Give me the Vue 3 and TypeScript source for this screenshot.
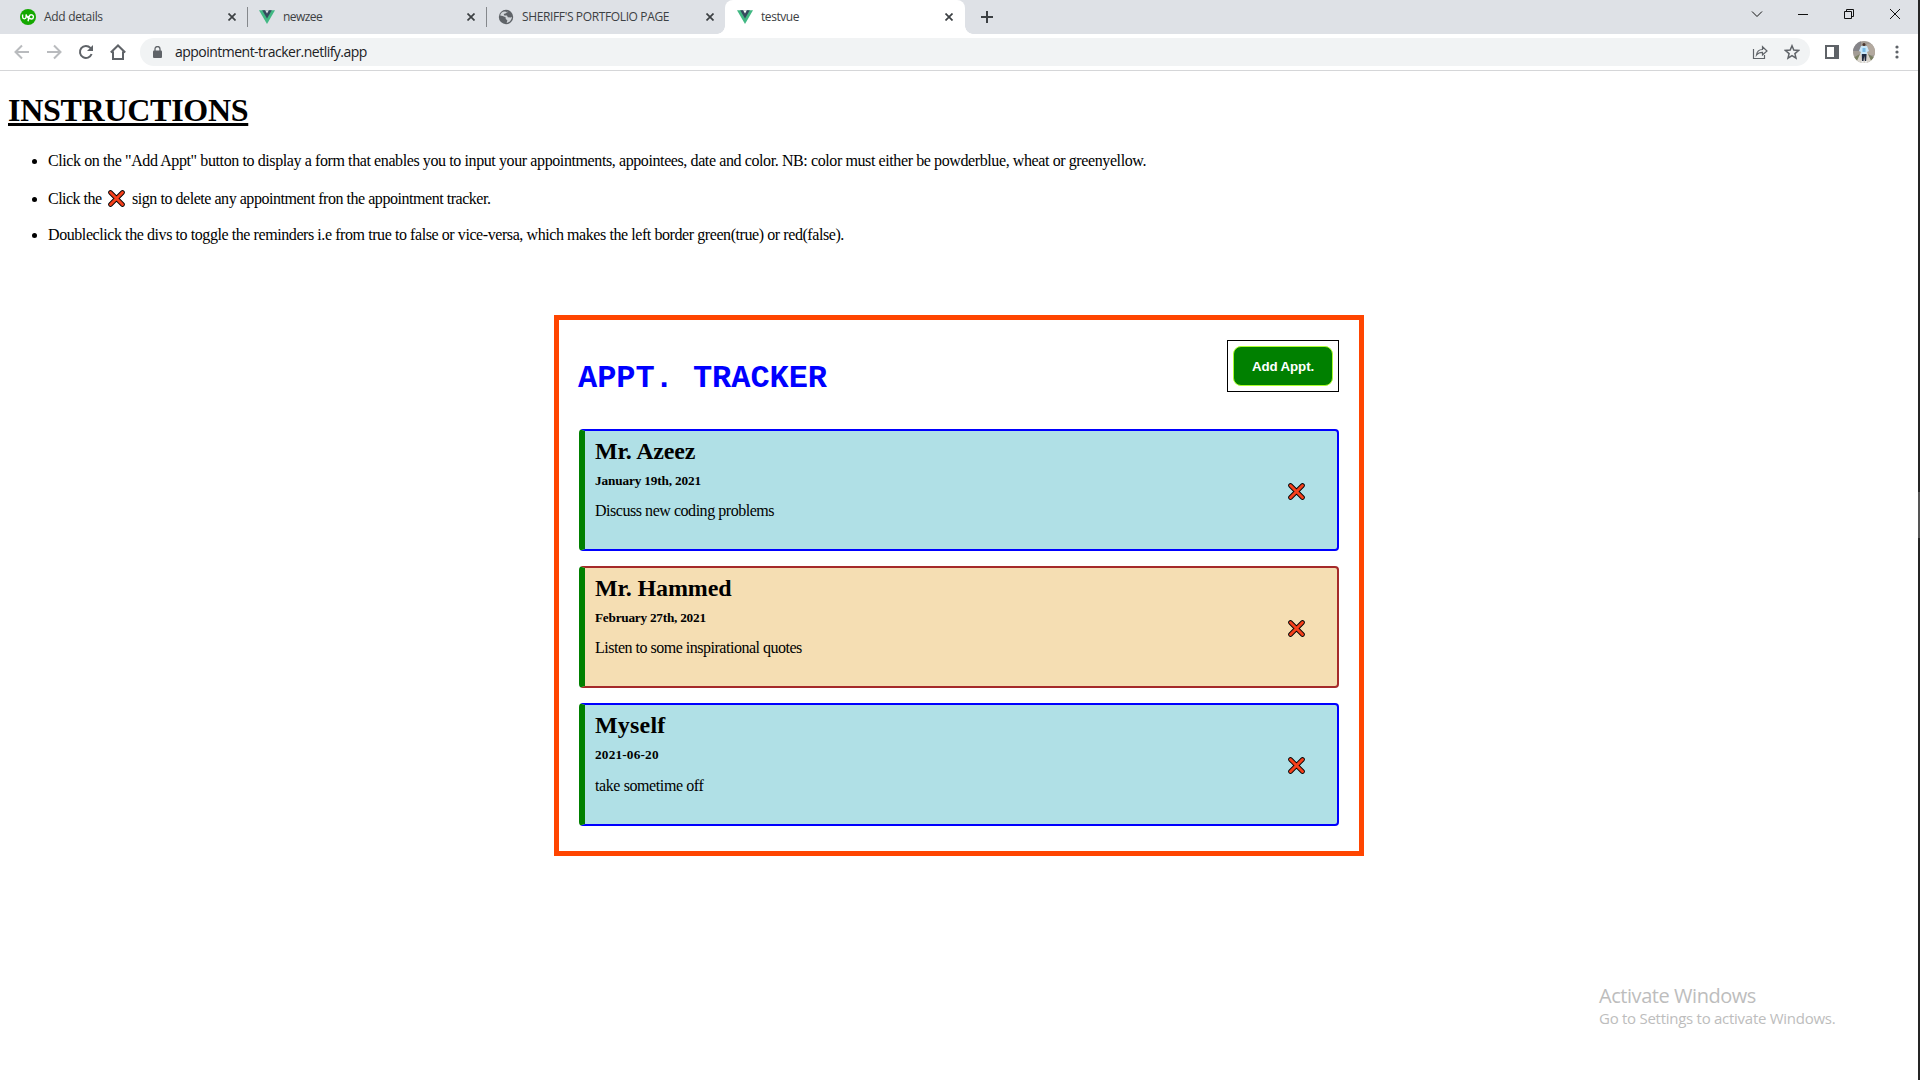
<script setup lang="ts">
interface Tab { title: string; icon: 'up' | 'vue' | 'globe'; active?: boolean; spacing: number }
interface Appointment { name: string; date: string; text: string; tone: string; spacing: [number, number, number] }

const tabs: Tab[] = [
  { title: 'Add details', icon: 'up', spacing: -0.31 },
  { title: 'newzee', icon: 'vue', spacing: -0.55 },
  { title: "SHERIFF'S PORTFOLIO PAGE", icon: 'globe', spacing: -0.37 },
  { title: 'testvue', icon: 'vue', active: true, spacing: -0.43 },
]
const appointments: Appointment[] = [
  { name: 'Mr. Azeez', date: 'January 19th, 2021', text: 'Discuss new coding problems', tone: 'powderblue', spacing: [-0.15, -0.15, -0.46] },
  { name: 'Mr. Hammed', date: 'February 27th, 2021', text: 'Listen to some inspirational quotes', tone: 'wheat', spacing: [-0.13, -0.24, -0.49] },
  { name: 'Myself', date: '2021-06-20', text: 'take sometime off', tone: 'powderblue', spacing: [0.2, 0.18, -0.4] },
]
</script>

<template>
  <div class="window">
    <div class="browser">
      <div class="tabstrip">
        <div v-for="tab in tabs" :key="tab.title" class="tab" :class="{ active: tab.active }">
          <svg v-if="tab.icon === 'up'" class="fav" viewBox="0 0 16 16">
            <circle cx="8" cy="8" r="8" fill="#14a800" />
            <path d="M2.6 5.4v2.7a1.7 1.7 0 0 0 3.5 0V5.4c.6 2 1.500 3.600 2.600 4.300M8 12.300l1.300-5a2.100 2.100 0 1 1 2 2.700c-1.500 0-2.800-1.300-3.600-2.800" fill="none" stroke="#fff" stroke-width="1.4" />
          </svg>
          <svg v-else-if="tab.icon === 'vue'" class="fav" viewBox="0 0 16 16">
            <path d="M0 1.200h16L8 15z" fill="#41b883" />
            <path d="M3.200 1.200h9.600L8 9.500z" fill="#35495e" />
            <path d="M6.100 1.200h3.800L8 4.500z" :fill="tab.active ? '#fff' : '#dee1e6'" />
          </svg>
          <svg v-else class="fav" viewBox="0 0 16 16">
            <circle cx="8" cy="8" r="7.200" fill="#5f6368" />
            <path d="M9.500 2.300 8 4.200 5.700 5l.6 1.500H9l.8 1.700 2.900.3 1.200-.8c0 3.200-2.400 5.800-5.300 6.100l.8-2.400-1.700-1.700-.1-1.400-3-1.300-2.400-.6c.2-2.600 3.400-5.300 7.300-3.100z" fill="#dee1e6" opacity=".9" />
          </svg>
          <span class="title" :style="{ letterSpacing: tab.spacing + 'px' }">{{ tab.title }}</span>
          <svg class="close" viewBox="0 0 8 8"><path d="M.5.5l7 7M7.500.5l-7 7" stroke="#3c4043" stroke-width="1.700" /></svg>
        </div>
        <svg class="plus" viewBox="0 0 12 12"><path d="M6 0v12M0 6h12" stroke="#3c4043" stroke-width="2" /></svg>
        <div class="controls">
          <svg viewBox="0 0 12 12"><path d="M1 3.500l5 5 5-5" /></svg>
          <svg viewBox="0 0 12 12"><path d="M1 6.500h10" shape-rendering="crispEdges" /></svg>
          <svg viewBox="0 0 12 12"><path d="M1.500 3.500h7v7h-7zM3.500 3.500v-2h7v7h-2" /></svg>
          <svg viewBox="0 0 12 12"><path d="M1 1l10 10M11 1L1 11" /></svg>
        </div>
      </div>

      <div class="toolbar">
        <div class="nav">
          <svg viewBox="0 0 16 16" class="off"><path d="M15 8H2M8 1.500L1.500 8 8 14.500" /></svg>
          <svg viewBox="0 0 16 16" class="off"><path d="M1 8h13M8 1.500L14.500 8 8 14.500" /></svg>
          <svg viewBox="0 0 16 16"><path d="M13.600 10A6 6 0 1 1 12.400 3.900L14 5.500" /><path d="M15 1v6H9z" fill="#5f6368" stroke="none" /></svg>
          <svg viewBox="0 0 16 16"><path d="M.8 8.500L8 1.500l7.200 7M3 7.500V15h10V7.500" /></svg>
        </div>
        <div class="omnibox">
          <svg class="lock" viewBox="0 0 9 12"><rect x="0" y="4.500" width="9" height="7.500" rx="1" fill="#5f6368" /><path d="M2 5V3a2.500 2.500 0 0 1 5 0v2" fill="none" stroke="#5f6368" stroke-width="1.300" /></svg>
          <span class="url">appointment-tracker.netlify.app</span>
          <svg class="share" viewBox="0 0 16 16"><path d="M1.500 5v9.500h11V11M4.500 11c.5-4 2.500-5.500 6-5.500V2.700L15 7l-4.500 4V8.300C8 8.300 6 9 4.500 11z" /></svg>
          <svg class="star" viewBox="0 0 16 16"><path d="M8 1.800l1.800 4.300 4.700.4-3.600 3.100 1.100 4.600L8 11.700l-4 2.500 1.100-4.600L1.500 6.500l4.700-.4z" /></svg>
        </div>
        <svg class="panel" viewBox="0 0 14 14"><path d="M1 1h12v12H1z" fill="#fff" stroke="#5f6368" stroke-width="2" /><path d="M9 1h4v12H9z" fill="#5f6368" /></svg>
        <svg class="avatar" viewBox="0 0 22 22">
          <defs><clipPath id="face"><circle cx="11" cy="11" r="11" /></clipPath></defs>
          <g clip-path="url(#face)">
            <path d="M0 0h22v22H0z" fill="#a29c95" /><path d="M0 0h8v10H0z" fill="#858489" /><path d="M14 3h8v11h-8z" fill="#b3a99f" />
            <path d="M8 11L2 22h18l-6-11z" fill="#d8d4cc" /><path d="M0 17l7-4-4 9H0zM22 17l-7-4 4 9h3z" fill="#7a8063" />
            <path d="M8 5h6l2 5-2 1v3H8v-3l-2-1z" fill="#c9e8fa" /><path d="M9.500 7h3v4h-3z" fill="#79bce8" />
            <circle cx="11" cy="3.500" r="1.500" fill="#49352d" /><path d="M8.800 13h4.800l-.5 7h-1.200l-.7-5-.7 5H9z" fill="#202b42" /><path d="M8.500 20h2v2h-2zM12 20h2v2h-2z" fill="#eee" />
          </g>
        </svg>
        <svg class="dots" viewBox="0 0 4 14"><circle cx="2" cy="2" r="1.600" /><circle cx="2" cy="7" r="1.600" /><circle cx="2" cy="12" r="1.600" /></svg>
      </div>

      <main>
        <h1>INSTRUCTIONS</h1>
        <ul>
          <li class="l1">Click on the "Add Appt" button to display a form that enables you to input your appointments, appointees, date and color. NB: color must either be powderblue, wheat or greenyellow.</li>
          <li class="l2"><span class="lead">Click the</span><svg class="cross" viewBox="0 0 17 17"><path d="M2.500 2.500l12 12M14.500 2.500l-12 12" class="edge" /><path d="M2.500 2.500l12 12M14.500 2.500l-12 12" class="fill" /></svg><span>sign to delete any appointment fron the appointment tracker.</span></li>
          <li class="l3">Doubleclick the divs to toggle the reminders i.e from true to false or vice-versa, which makes the left border green(true) or red(false).</li>
        </ul>

        <section class="tracker">
          <header>
            <h2>APPT. TRACKER</h2>
            <div class="btnbox"><button>Add Appt.</button></div>
          </header>
          <article v-for="a in appointments" :key="a.name" :class="a.tone">
            <div class="details">
              <h3 :style="{ letterSpacing: a.spacing[0] + 'px' }">{{ a.name }}</h3>
              <h5 :style="{ letterSpacing: a.spacing[1] + 'px' }">{{ a.date }}</h5>
              <p :style="{ letterSpacing: a.spacing[2] + 'px' }">{{ a.text }}</p>
            </div>
            <svg class="cross" viewBox="0 0 17 17"><path d="M2.500 2.500l12 12M14.500 2.500l-12 12" class="edge" /><path d="M2.500 2.500l12 12M14.500 2.500l-12 12" class="fill" /></svg>
          </article>
        </section>
      </main>
    </div>
    <div class="edgebar"><i></i></div>
    <aside class="activate">
      <div class="big">Activate Windows</div>
      <div class="small">Go to Settings to activate Windows.</div>
    </aside>
  </div>
</template>

<style>
body { margin: 0; overflow: hidden; background: #fff; }
</style>
<style scoped>
* { box-sizing: border-box; }
svg { display: block; flex: none; }
h1, h2, h3, h5, p, ul { margin: 0; }
.window { position: relative; display: flex; width: 1920px; height: 1080px; overflow: hidden; color: #000; }
.browser { width: 1918px; }
.edgebar { width: 2px; background: #252525; padding-top: 492px; }
.edgebar i { display: block; height: 46px; background: #555; }
.tabstrip { display: flex; height: 34px; background: #dee1e6; font: 12px/16px "Open Sans", "Noto Sans", sans-serif; color: #3c4043; padding-left: 9px; }
.tab { display: flex; align-items: center; width: 239px; padding: 0 12px 0 11px; background: linear-gradient(#85888c, #85888c) right 0 top 7px / 1px 20px no-repeat; }
.tab:nth-child(3) { background: none; }
.tab.active { position: relative; background: #fff; width: 240px; margin-left: -1px; padding-left: 12px; border-radius: 8px 8px 0 0; }
.tab.active::before, .tab.active::after { content: ""; position: absolute; bottom: 0; width: 8px; height: 8px; }
.tab.active::before { left: -8px; background: radial-gradient(circle at 0 0, transparent 7.5px, #fff 8px); }
.tab.active::after { right: -8px; background: radial-gradient(circle at 100% 0, transparent 7.5px, #fff 8px); }
.fav { width: 16px; height: 16px; }
.title { margin-left: 8px; white-space: nowrap; }
.close { width: 8px; height: 8px; margin-left: auto; }
.plus { width: 12px; height: 12px; margin: 11px 0 0 16px; }
.controls { display: flex; gap: 34px; margin: 8px 17px 0 auto; }
.controls svg { width: 12px; height: 12px; fill: none; stroke: #111; stroke-width: 1; }
.toolbar { display: flex; align-items: center; height: 37px; border-bottom: 1px solid #d5d6d8; background: #fff; }
.nav { display: flex; gap: 16px; padding-left: 14px; width: 140px; }
.nav svg { width: 16px; height: 16px; fill: none; stroke: #5f6368; stroke-width: 2; }
.nav .off { stroke: #b9bbbe; }
.omnibox { display: flex; align-items: center; width: 1670px; height: 28px; border-radius: 14px; background: #f1f3f4; padding-left: 13px; font: 14px/20px "Open Sans", "Noto Sans", sans-serif; color: #202124; }
.lock { width: 9px; height: 12px; }
.url { margin-left: 13px; letter-spacing: -.52px; }
.share { width: 16px; height: 16px; margin-left: auto; fill: none; stroke: #5f6368; stroke-width: 1.200; }
.star { width: 16px; height: 16px; margin: 0 10px 0 16px; fill: none; stroke: #5f6368; stroke-width: 1.500; }
.panel { width: 14px; height: 14px; margin-left: 15px; }
.avatar { width: 22px; height: 22px; margin-left: 14px; }
.dots { width: 4px; height: 14px; margin-left: 20px; fill: #5f6368; }
main { padding: 21px 8px 0; font: 16px/18px "Liberation Serif", serif; }
h1 { width: max-content; font-size: 32px; line-height: 37px; letter-spacing: -.28px; text-decoration: underline; text-decoration-thickness: 3px; text-underline-offset: 2px; }
ul { padding-left: 40px; margin-top: 23px; }
li { white-space: nowrap; }
.l1 { letter-spacing: -.4px; }
.l2 { margin-top: 20px; letter-spacing: -.46px; }
.lead { letter-spacing: -.52px; }
.l3 { margin-top: 18px; letter-spacing: -.423px; }
.cross { width: 17px; height: 17px; }
li .cross { display: inline-block; margin: 0 7px 0 6.500px; vertical-align: -3px; }
.edge, .fill { stroke-linecap: round; }
.edge { stroke: #000; stroke-width: 4.600; }
.fill { stroke: #f5401b; stroke-width: 2.900; }
.tracker { width: 810px; height: 541px; margin: 71px 0 0 546px; border: 5px solid orangered; padding: 20px; }
header { display: flex; justify-content: space-between; height: 89px; }
h2 { font: bold 32px/36px "Liberation Mono", monospace; color: blue; padding-top: 21px; margin-left: -1px; letter-spacing: -.05px; }
.btnbox { width: 112px; height: 52px; padding: 5px; border: 1px solid #000; }
button { width: 100px; height: 40px; padding: 0; border: 1px solid greenyellow; border-radius: 8px; background: green; color: #fff; font: bold 13.333px "Liberation Sans", Arial, sans-serif; letter-spacing: -.12px; }
article { display: flex; justify-content: space-between; height: 122px; margin-bottom: 15px; border: 2px solid blue; border-left: 6px solid green; border-radius: 4px; padding: 0 32.500px 0 10px; }
article:last-child { height: 123px; }
article .cross { margin-top: 52px; }
.powderblue { background: powderblue; }
.wheat { background: wheat; border-color: brown; border-left-color: green; }
h3 { font-size: 24px; line-height: 28px; margin-top: 6px; }
h5 { font-size: 13.280px; line-height: 16px; margin-top: 8px; }
p { margin-top: 13px; }
article:last-child p { margin-top: 14px; }
.activate { position: absolute; left: 1599px; top: 983px; color: #bdbdbd; font-family: "Open Sans", "Noto Sans", sans-serif; white-space: nowrap; }
.big { font-size: 20px; line-height: 26px; letter-spacing: -.45px; }
.small { font-size: 15px; line-height: 19px; letter-spacing: -.27px; }
</style>
